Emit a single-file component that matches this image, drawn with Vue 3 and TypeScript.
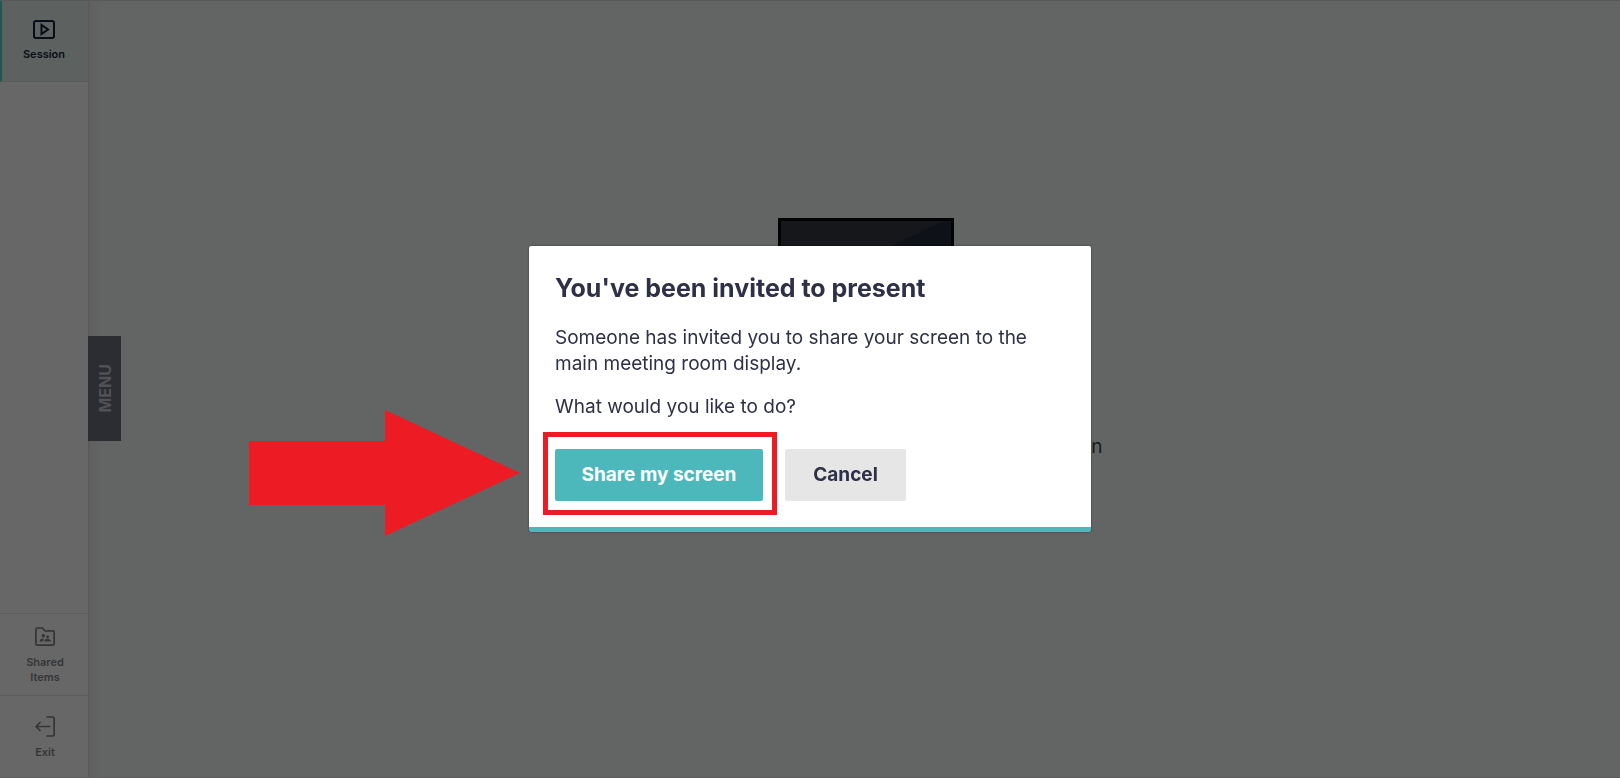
<script setup lang="ts">
import { ref } from 'vue'

const open = ref(true)
</script>

<template>
  <div class="app">
    <nav class="sidebar">
      <a class="item active" href="#session">
        <svg width="22" height="20" viewBox="0 0 22 20" fill="none" stroke="currentColor" stroke-width="2" stroke-linejoin="round">
          <rect x="1" y="1" width="20" height="17" rx="2" />
          <path d="M8.500 5v9l6.500-4.500z" stroke-linejoin="miter" />
        </svg>
        <span>Session</span>
      </a>
      <div class="spacer"></div>
      <a class="item shared" href="#shared">
        <svg width="20" height="20" viewBox="0 0 20 20" fill="none" stroke="currentColor" stroke-width="1.700" stroke-linejoin="round">
          <path d="M2.400 1h5l2.400 2.800h7.800A1.500 1.500 0 0 1 19.200 5.300v11.400a1.500 1.500 0 0 1-1.500 1.500H2.400a1.500 1.500 0 0 1-1.500-1.500V2.500A1.500 1.500 0 0 1 2.400 1z" />
          <g fill="currentColor" stroke="none">
            <circle cx="8.300" cy="8.700" r="1.700" />
            <circle cx="12.600" cy="10" r="1.400" />
            <path d="M4.800 14.500v-1c0-1.400 1.900-2.100 3.600-2.100l.9.100c-.8.600-1.200 1.200-1.200 2.100v.9z" />
            <path d="M9.300 14.500v-.8c0-1.200 1.700-1.800 3.200-1.800s3.300.6 3.300 1.800v.8z" />
          </g>
        </svg>
        <span>Shared<br />Items</span>
      </a>
      <a class="item exit" href="#exit">
        <svg width="20" height="22" viewBox="0 0 20 22" fill="none" stroke="currentColor" stroke-width="1.700" stroke-linecap="round" stroke-linejoin="round">
          <path d="M12 1h5.500a1.700 1.700 0 0 1 1.700 1.700v15.600a1.700 1.700 0 0 1-1.700 1.700H12" />
          <path d="M14.500 10.500H1M5 6.500l-4 4 4 4" />
        </svg>
        <span>Exit</span>
      </a>
    </nav>

    <main class="stage">
      <button class="menu-tab" type="button"><span>MENU</span></button>
      <div class="display">
        <svg class="monitor" width="176" height="120" viewBox="0 0 176 120">
          <rect width="176" height="108" fill="#010204" />
          <rect x="3" y="3" width="170" height="102" fill="#15171b" />
          <path d="M165 3h8v102H-43z" fill="#0f1118" />
          <path d="M60 108h56v12H60z" fill="#010204" />
        </svg>
        <p class="hint">screen</p>
      </div>
    </main>

    <div v-if="open" class="overlay">
      <section class="dialog" role="dialog" aria-labelledby="dialog-title">
        <h1 id="dialog-title">You've been invited to present</h1>
        <p>Someone has invited you to share your screen to the main meeting room display.</p>
        <p>What would you like to do?</p>
        <div class="actions">
          <div class="highlight">
            <button class="primary" type="button" @click="open = false">Share my screen</button>
          </div>
          <button class="secondary" type="button" @click="open = false">Cancel</button>
        </div>
        <svg class="arrow" width="272" height="128" viewBox="0 0 272 128" aria-hidden="true">
          <path d="M0 31h136V0l135 63L136 126V95H0z" fill="#ed1c24" />
        </svg>
      </section>
    </div>
  </div>
</template>

<style>
body {
  margin: 0;
}
</style>

<style scoped>
.app {
  box-sizing: border-box;
  display: flex;
  min-height: 100vh;
  background: #636564;
  border-top: 1px solid #575958;
  border-bottom: 1px solid #5c5d5e;
  font-family: Inter, "Liberation Sans", sans-serif;
}
.sidebar {
  box-sizing: border-box;
  display: flex;
  flex-direction: column;
  width: 89px;
  flex: none;
  background: #676767;
  border-right: 1px solid #595959;
}
.spacer {
  flex: 1;
}
.item {
  box-sizing: border-box;
  display: flex;
  flex-direction: column;
  align-items: center;
  gap: 8px;
  height: 82px;
  border-top: 1px solid #5e5e5e;
  color: #353538;
  font-size: 11px;
  font-weight: 600;
  line-height: 15px;
  text-align: center;
  text-decoration: none;
}
.item svg {
  display: block;
}
.active {
  gap: 7px;
  height: 81px;
  padding: 19px 2px 0 0;
  border-top: 0;
  border-left: 2px solid #245557;
  border-bottom: 1px solid #575b5a;
  background: #5d6160;
  color: #090d18;
}
.shared {
  padding-top: 13px;
  padding-left: 2px;
}
.exit {
  gap: 7px;
  padding-top: 20px;
  padding-left: 2px;
}
.stage {
  flex: 1;
  display: flex;
  align-items: center;
  background: linear-gradient(90deg, #5f5f5f, #636564 14px);
}
.menu-tab {
  display: flex;
  align-items: center;
  justify-content: center;
  width: 33px;
  height: 105px;
  margin: 0 0 2px -1px;
  padding: 0;
  border: 0;
  background: #2b2d33;
  color: #505154;
  font: 700 16px/20px Inter, "Liberation Sans", sans-serif;
}
.menu-tab span {
  writing-mode: vertical-rl;
  transform: rotate(180deg);
}
.display {
  flex: 1;
  display: flex;
  flex-direction: column;
  align-items: center;
  gap: 96px;
  padding-bottom: 100px;
  padding-right: 10px;
}
.monitor {
  display: block;
}
.hint {
  width: 474px;
  margin: 0;
  color: #17191d;
  font-size: 19px;
  line-height: 26px;
  text-align: right;
}
.overlay {
  position: fixed;
  inset: 0;
  display: flex;
  align-items: center;
  justify-content: center;
}
.dialog {
  position: relative;
  box-sizing: border-box;
  width: 562px;
  padding: 26px;
  border-bottom: 5px solid #4db8bc;
  border-radius: 2px;
  background: #fff;
  box-shadow: 0 0 2px rgba(0, 0, 0, 0.5);
  color: #2e3047;
}
.dialog h1 {
  margin: 0 0 21px;
  font-size: 25px;
  font-weight: 700;
  line-height: 32px;
}
.dialog p {
  margin: 0 0 17px;
  font-size: 19px;
  line-height: 26px;
}
.actions {
  display: flex;
  gap: 22px;
  margin-top: 29px;
}
.actions button {
  display: block;
  height: 52px;
  padding: 0;
  border: 0;
  border-radius: 2px;
  font: 700 19px/26px Inter, "Liberation Sans", sans-serif;
  white-space: nowrap;
}
.highlight {
  position: relative;
}
.highlight::after {
  content: "";
  position: absolute;
  inset: -17px -14px -14px -12px;
  border: 5px solid #ed1c24;
  pointer-events: none;
}
.actions .primary {
  width: 208px;
  background: #4db8bc;
  color: #fff;
}
.actions .secondary {
  width: 121px;
  background: #e6e6e6;
  color: #2e3047;
}
.arrow {
  position: absolute;
  top: 164px;
  left: -280px;
}
</style>
